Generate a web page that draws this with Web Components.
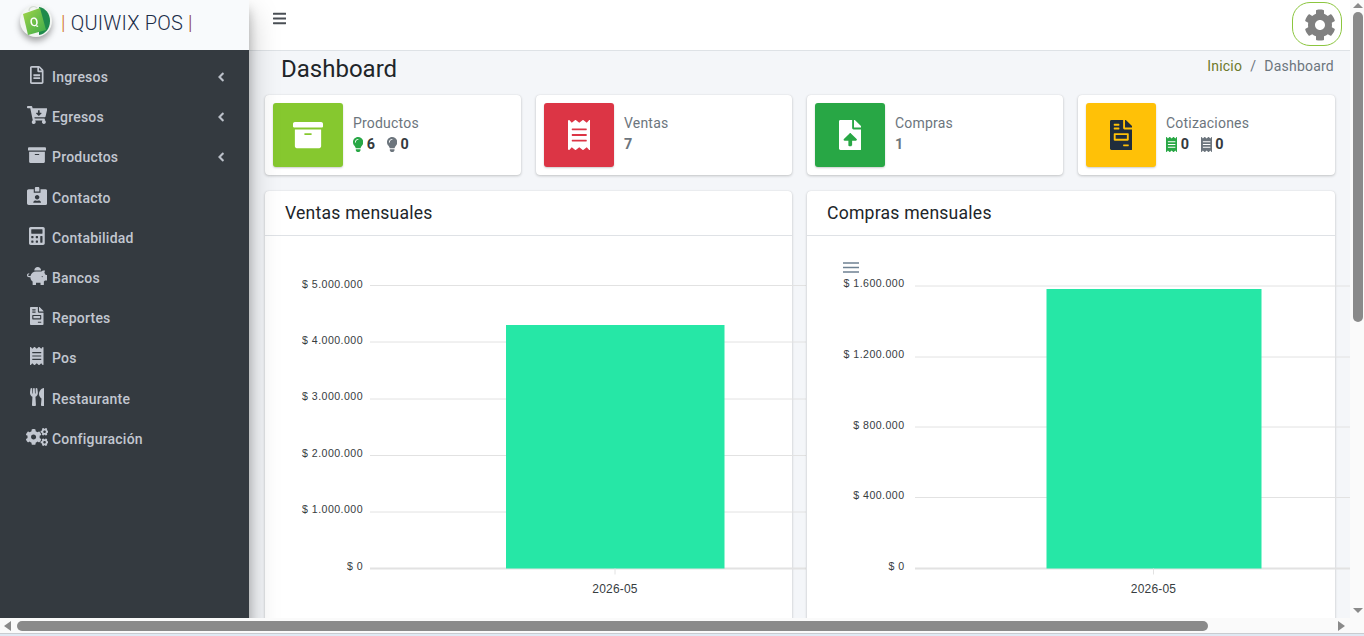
<!DOCTYPE html>
<html lang="es">
<head>
<meta charset="utf-8">
<title>Quiwix POS</title>
<style>
html,body{margin:0;padding:0;height:100%;overflow:hidden;background:#f4f6f9}
body{font-family:Roboto,"Liberation Sans",sans-serif;font-size:14px}
</style>
</head>
<body>
<pos-app>
  <side-bar slot="side">
    <nav-item icon="fileAlt" arrow>Ingresos</nav-item>
    <nav-item icon="cartDown" arrow>Egresos</nav-item>
    <nav-item icon="archive" arrow>Productos</nav-item>
    <nav-item icon="idCard">Contacto</nav-item>
    <nav-item icon="calculator">Contabilidad</nav-item>
    <nav-item icon="piggy">Bancos</nav-item>
    <nav-item icon="invoice">Reportes</nav-item>
    <nav-item icon="receipt">Pos</nav-item>
    <nav-item icon="utensils">Restaurante</nav-item>
    <nav-item icon="cogs">Configuración</nav-item>
  </side-bar>
  <top-bar slot="top"></top-bar>
  <page-head slot="head" title="Dashboard"></page-head>
  <stat-card slot="stats" color="#86c82f" icon="archive" label="Productos" fg="#fff">
    <stat-num icon="bulb" color="#28a745">6</stat-num>
    <stat-num icon="bulb" color="#6c757d">0</stat-num>
  </stat-card>
  <stat-card slot="stats" color="#dc3545" icon="receipt" label="Ventas" fg="#fff" value="7"></stat-card>
  <stat-card slot="stats" color="#28a745" icon="fileUp" label="Compras" fg="#fff" value="1"></stat-card>
  <stat-card slot="stats" color="#ffc107" icon="invoice" label="Cotizaciones" fg="#1f2d3d">
    <stat-num icon="receipt" color="#28a745">0</stat-num>
    <stat-num icon="receipt" color="#6c757d">0</stat-num>
  </stat-card>
  <chart-card slot="charts" title="Ventas mensuales">
    <bar-chart ticks="$ 5.000.000,$ 4.000.000,$ 3.000.000,$ 2.000.000,$ 1.000.000,$ 0"
      ys="49.5,106,163,219.5,276,332.5" laby="52,108,164,221,277,334" labelx="98" gridx="105" bar="241,89,218.5,243.5" center="350"></bar-chart>
  </chart-card>
  <chart-card slot="charts" title="Compras mensuales">
    <bar-chart ticks="$ 1.600.000,$ 1.200.000,$ 800.000,$ 400.000,$ 0"
      ys="50,121,191,261.5,332.5" laby="51,122,193,263,334" labelx="97.5" gridx="108" bar="239.5,53,215,279.5" center="346.5" menu></bar-chart>
  </chart-card>
</pos-app>

<script>
const ICONS = {
  archive:[512,'M32 448c0 17.7 14.3 32 32 32h384c17.7 0 32-14.3 32-32V160H32v288zm160-212c0-6.6 5.4-12 12-12h104c6.6 0 12 5.4 12 12v8c0 6.6-5.4 12-12 12H204c-6.6 0-12-5.4-12-12v-8zM480 32H32C14.3 32 0 46.3 0 64v48c0 8.8 7.2 16 16 16h480c8.8 0 16-7.2 16-16V64c0-17.7-14.3-32-32-32z'],
  cog:[512,'M487.4 315.7l-42.6-24.6c4.3-23.2 4.3-47 0-70.2l42.6-24.6c4.9-2.8 7.1-8.6 5.5-14-11.1-35.6-30-67.8-54.7-94.6-3.8-4.1-10-5.1-14.8-2.3L380.8 110c-17.9-15.4-38.5-27.3-60.8-35.1V25.8c0-5.6-3.9-10.5-9.4-11.7-36.7-8.2-74.3-7.8-109.2 0-5.5 1.2-9.4 6.1-9.4 11.7V75c-22.2 7.9-42.8 19.8-60.8 35.1L88.7 85.5c-4.9-2.8-11-1.9-14.8 2.3-24.7 26.7-43.6 58.9-54.7 94.6-1.7 5.4.6 11.2 5.5 14L67.3 221c-4.3 23.2-4.3 47 0 70.2l-42.6 24.6c-4.9 2.8-7.1 8.6-5.5 14 11.1 35.6 30 67.8 54.7 94.6 3.8 4.1 10 5.1 14.8 2.3l42.6-24.6c17.9 15.4 38.5 27.3 60.8 35.1v49.2c0 5.6 3.9 10.5 9.4 11.7 36.7 8.2 74.3 7.8 109.2 0 5.5-1.2 9.4-6.1 9.4-11.7v-49.2c22.2-7.9 42.8-19.8 60.8-35.1l42.6 24.6c4.9 2.8 11 1.9 14.8-2.3 24.7-26.7 43.6-58.9 54.7-94.6 1.5-5.5-.7-11.3-5.6-14.1zM256 336c-44.1 0-80-35.9-80-80s35.9-80 80-80 80 35.9 80 80-35.9 80-80 80z'],
  fileAlt:[384,'M288 248v28c0 6.6-5.4 12-12 12H108c-6.6 0-12-5.4-12-12v-28c0-6.6 5.4-12 12-12h168c6.6 0 12 5.4 12 12zm-12 72H108c-6.6 0-12 5.4-12 12v28c0 6.6 5.4 12 12 12h168c6.6 0 12-5.4 12-12v-28c0-6.6-5.4-12-12-12zm108-188.1V464c0 26.5-21.5 48-48 48H48c-26.5 0-48-21.5-48-48V48C0 21.5 21.5 0 48 0h204.1C264.8 0 277 5.1 286 14.1L369.9 98c9 8.9 14.1 21.2 14.1 33.9zm-128-80V128h76.1L256 51.9zM336 464V176H232c-13.3 0-24-10.7-24-24V48H48v416h288z'],
  cartDown:[576,'M504.717 320H211.572l6.545 32h268.418c15.401 0 26.816 14.301 23.403 29.319l-5.517 24.276C523.112 414.668 536 433.828 536 456c0 31.202-25.519 56.444-56.824 55.994-29.823-.429-54.35-24.631-55.155-54.447-.44-16.287 6.085-31.049 16.803-41.548H231.176C241.553 426.165 248 440.326 248 456c0 31.813-26.528 57.431-58.67 55.938-28.54-1.325-51.751-24.385-53.251-52.917-1.158-22.034 10.436-41.455 28.051-51.586L93.883 64H24C10.745 64 0 53.255 0 40V24C0 10.745 10.745 0 24 0h102.529c11.401 0 21.228 8.021 23.513 19.19L159.208 64H551.99c15.401 0 26.816 14.301 23.403 29.319l-47.273 208C525.637 312.246 515.923 320 504.717 320zM403.029 192H360v-60c0-6.627-5.373-12-12-12h-24c-6.627 0-12 5.373-12 12v60h-43.029c-10.691 0-16.045 12.926-8.485 20.485l67.029 67.029c4.686 4.686 12.284 4.686 16.971 0l67.029-67.029c7.559-7.559 2.205-20.485-8.486-20.485z'],
  idCard:[576,'M528 64H384v96H192V64H48C21.5 64 0 85.5 0 112v352c0 26.5 21.5 48 48 48h480c26.5 0 48-21.5 48-48V112c0-26.5-21.5-48-48-48zM288 224c35.3 0 64 28.7 64 64s-28.7 64-64 64-64-28.7-64-64 28.7-64 64-64zm93.3 224H194.7c-10.4 0-18.8-10-15.6-19.8 8.3-25.6 32.4-44.2 60.9-44.2h8.2c12.3 5.1 25.7 8 39.8 8s27.6-2.9 39.8-8h8.2c28.4 0 52.5 18.5 60.9 44.2 3.2 9.8-5.2 19.8-15.6 19.8zM352 32c0-17.7-14.3-32-32-32h-64c-17.7 0-32 14.3-32 32v96h128V32z'],
  calculator:[448,'M400 0H48C22.4 0 0 22.4 0 48v416c0 25.6 22.4 48 48 48h352c25.6 0 48-22.4 48-48V48c0-25.6-22.4-48-48-48zM128 435.2c0 6.4-6.4 12.8-12.8 12.8H76.8c-6.4 0-12.8-6.4-12.8-12.8v-38.4c0-6.4 6.4-12.8 12.8-12.8h38.4c6.4 0 12.8 6.4 12.8 12.8v38.4zm0-128c0 6.4-6.4 12.8-12.8 12.8H76.8c-6.4 0-12.8-6.4-12.8-12.8v-38.4c0-6.4 6.4-12.8 12.8-12.8h38.4c6.4 0 12.8 6.4 12.8 12.8v38.4zm128 128c0 6.4-6.4 12.8-12.8 12.8h-38.4c-6.4 0-12.8-6.4-12.8-12.8v-38.4c0-6.4 6.4-12.8 12.8-12.8h38.4c6.4 0 12.8 6.4 12.8 12.8v38.4zm0-128c0 6.4-6.4 12.8-12.8 12.8h-38.4c-6.4 0-12.8-6.4-12.8-12.8v-38.4c0-6.4 6.4-12.8 12.8-12.8h38.4c6.4 0 12.8 6.4 12.8 12.8v38.4zm128 128c0 6.4-6.4 12.8-12.8 12.8h-38.4c-6.4 0-12.8-6.4-12.8-12.8V268.8c0-6.4 6.4-12.8 12.8-12.8h38.4c6.4 0 12.8 6.4 12.8 12.8v166.4zm0-256c0 6.4-6.4 12.8-12.8 12.8H76.8c-6.4 0-12.8-6.4-12.8-12.8V76.8C64 70.4 70.4 64 76.8 64h294.4c6.4 0 12.8 6.4 12.8 12.8v102.4z'],
  piggy:[576,'M560 224h-29.5c-8.8-20-21.6-37.7-37.4-52.5L512 96h-32c-29.4 0-55.4 13.5-73 34.3-7.6-1.1-15.1-2.3-23-2.3H256c-77.4 0-141.9 55-156.8 128H56c-14.8 0-26.5-13.5-23.5-28.8C34.7 215.8 45.4 208 57 208h1c3.3 0 6-2.7 6-6v-20c0-3.3-2.7-6-6-6-28.5 0-53.9 20.4-57.5 48.6C-3.9 258.8 22.7 288 56 288h40c0 52.2 25.4 98.1 64 127.3V496c0 8.8 7.2 16 16 16h64c8.8 0 16-7.2 16-16v-48h128v48c0 8.8 7.2 16 16 16h64c8.8 0 16-7.2 16-16v-80.7c11.8-8.9 22.3-19.4 31.3-31.3H560c8.8 0 16-7.2 16-16V240c0-8.8-7.2-16-16-16zm-128 64c-8.8 0-16-7.2-16-16s7.2-16 16-16 16 7.2 16 16-7.2 16-16 16zM256 96h128c5.4 0 10.7.4 15.9.8 0-.3.1-.5.1-.8 0-53-43-96-96-96s-96 43-96 96c0 2.1.5 4.1.6 6.2 15.2-3.9 31-6.2 47.4-6.2z'],
  invoice:[384,'M288 256H96v64h192v-64zm89-151L279.1 7c-4.5-4.5-10.6-7-17-7H256v128h128v-6.1c0-6.3-2.5-12.4-7-16.9zm-153 31V0H24C10.7 0 0 10.7 0 24v464c0 13.3 10.7 24 24 24h336c13.3 0 24-10.7 24-24V160H248c-13.2 0-24-10.8-24-24zM64 72c0-4.42 3.58-8 8-8h80c4.42 0 8 3.58 8 8v16c0 4.42-3.58 8-8 8H72c-4.42 0-8-3.58-8-8V72zm0 64c0-4.42 3.58-8 8-8h80c4.42 0 8 3.58 8 8v16c0 4.42-3.58 8-8 8H72c-4.42 0-8-3.58-8-8v-16zm256 304c0 4.42-3.58 8-8 8h-80c-4.42 0-8-3.58-8-8v-16c0-4.42 3.58-8 8-8h80c4.42 0 8 3.58 8 8v16zm0-200v96c0 8.84-7.16 16-16 16H80c-8.84 0-16-7.16-16-16v-96c0-8.84 7.16-16 16-16h224c8.84 0 16 7.16 16 16z'],
  receipt:[384,'M358.4 3.2L320 48 265.6 3.2a15.9 15.9 0 0 0-19.2 0L192 48 137.6 3.2a15.9 15.9 0 0 0-19.2 0L64 48 25.6 3.2C15-4.7 0 2.8 0 16v480c0 13.2 15 20.7 25.6 12.8L64 464l54.4 44.8a15.9 15.9 0 0 0 19.2 0L192 464l54.4 44.8a15.9 15.9 0 0 0 19.2 0L320 464l38.4 44.8c10.5 7.9 25.6.4 25.6-12.8V16c0-13.2-15-20.7-25.6-12.8zM320 360c0 4.4-3.6 8-8 8H72c-4.4 0-8-3.6-8-8v-16c0-4.4 3.6-8 8-8h240c4.4 0 8 3.6 8 8v16zm0-96c0 4.4-3.6 8-8 8H72c-4.4 0-8-3.6-8-8v-16c0-4.4 3.6-8 8-8h240c4.4 0 8 3.6 8 8v16zm0-96c0 4.4-3.6 8-8 8H72c-4.4 0-8-3.6-8-8v-16c0-4.4 3.6-8 8-8h240c4.4 0 8 3.6 8 8v16z'],
  utensils:[416,'M207.9 15.2c.8 4.7 16.1 94.5 16.1 128.8 0 52.3-27.8 89.6-68.9 104.6L168 486.7c.7 13.7-10.2 25.3-24 25.3H80c-13.7 0-24.7-11.5-24-25.3l12.9-238.1C27.7 233.6 0 196.2 0 144 0 109.6 15.3 19.9 16.1 15.2 19.3-5.1 61.4-5.4 64 16.3v141.2c1.3 3.4 15.1 3.2 16 0 1.4-25.3 7.9-139.2 8-141.8 3.3-20.8 44.7-20.8 47.9 0 .2 2.7 6.6 116.5 8 141.8.9 3.2 14.8 3.4 16 0V16.3c2.6-21.6 44.8-21.4 48-1.1zm119.2 285.7l-15 185.1c-1.2 14 9.9 26 23.9 26h56c13.3 0 24-10.7 24-24V24c0-13.2-10.7-24-24-24-82.5 0-221.4 178.5-64.9 300.9z'],
  cogs:[640,'M512.1 191l-8.2 14.3c-3 5.3-9.4 7.5-15.1 5.4-11.8-4.4-22.6-10.7-32.1-18.6-4.6-3.8-5.8-10.5-2.8-15.7l8.2-14.3c-6.9-8-12.3-17.3-15.9-27.4h-16.5c-6 0-11.2-4.3-12.2-10.3-2-12-2.1-24.6 0-37.1 1-6 6.2-10.4 12.2-10.4h16.5c3.6-10.1 9-19.4 15.9-27.4l-8.2-14.3c-3-5.2-1.9-11.9 2.8-15.7 9.5-7.9 20.4-14.2 32.1-18.6 5.7-2.1 12.1.1 15.1 5.4l8.2 14.3c10.5-1.9 21.2-1.9 31.7 0L552 6.3c3-5.3 9.4-7.5 15.1-5.4 11.8 4.4 22.6 10.7 32.1 18.6 4.6 3.8 5.8 10.5 2.8 15.7l-8.2 14.3c6.9 8 12.3 17.3 15.9 27.4h16.5c6 0 11.2 4.3 12.2 10.3 2 12 2.1 24.6 0 37.1-1 6-6.2 10.4-12.2 10.4h-16.5c-3.6 10.1-9 19.4-15.9 27.4l8.2 14.3c3 5.2 1.9 11.9-2.8 15.7-9.5 7.9-20.4 14.2-32.1 18.6-5.7 2.1-12.1-.1-15.1-5.4l-8.2-14.3c-10.4 1.9-21.2 1.9-31.7 0zm-10.5-58.8c38.5 29.6 82.4-14.3 52.8-52.8-38.5-29.7-82.4 14.3-52.8 52.8zM386.3 286.1l33.7 16.8c10.1 5.8 14.5 18.1 10.5 29.1-8.9 24.2-26.4 46.4-42.6 65.8-7.4 8.9-20.2 11.1-30.3 5.3l-29.1-16.8c-16 13.7-34.6 24.6-54.9 31.7v33.6c0 11.6-8.3 21.6-19.7 23.6-24.6 4.2-50.4 4.4-75.9 0-11.5-2-20-11.9-20-23.6V418c-20.3-7.2-38.9-18-54.9-31.7L74 403c-10 5.8-22.9 3.6-30.3-5.3-16.2-19.4-33.3-41.6-42.2-65.7-4-10.9.4-23.2 10.5-29.1l33.3-16.8c-3.9-20.9-3.9-42.4 0-63.4L12 205.8c-10.1-5.8-14.6-18.1-10.5-29 8.9-24.2 26-46.4 42.2-65.8 7.4-8.9 20.2-11.1 30.3-5.3l29.1 16.8c16-13.7 34.6-24.6 54.9-31.7V57.1c0-11.5 8.2-21.5 19.6-23.5 24.6-4.2 50.5-4.4 76-.1 11.5 2 20 11.9 20 23.6v33.6c20.3 7.2 38.9 18 54.9 31.7l29.1-16.8c10-5.8 22.9-3.6 30.3 5.3 16.2 19.4 33.2 41.6 42.1 65.8 4 10.9.1 23.2-10 29.1l-33.7 16.8c3.9 21 3.9 42.5 0 63.5zm-117.6 21.1c59.2-77-28.7-164.9-105.7-105.7-59.2 77 28.7 164.9 105.7 105.7zm243.4 182.7l-8.2 14.3c-3 5.3-9.4 7.5-15.1 5.4-11.8-4.4-22.6-10.7-32.1-18.6-4.6-3.8-5.8-10.5-2.8-15.7l8.2-14.3c-6.9-8-12.3-17.3-15.9-27.4h-16.5c-6 0-11.2-4.3-12.2-10.3-2-12-2.1-24.6 0-37.1 1-6 6.2-10.4 12.2-10.4h16.5c3.6-10.1 9-19.4 15.9-27.4l-8.2-14.3c-3-5.2-1.9-11.9 2.8-15.7 9.5-7.9 20.4-14.2 32.1-18.6 5.7-2.1 12.1.1 15.1 5.4l8.2 14.3c10.5-1.9 21.2-1.9 31.7 0l8.2-14.3c3-5.3 9.4-7.5 15.1-5.4 11.8 4.4 22.6 10.7 32.1 18.6 4.6 3.8 5.8 10.5 2.8 15.7l-8.2 14.3c6.9 8 12.3 17.3 15.9 27.4h16.5c6 0 11.2 4.3 12.2 10.3 2 12 2.1 24.6 0 37.1-1 6-6.2 10.4-12.2 10.4h-16.5c-3.6 10.1-9 19.4-15.9 27.4l8.2 14.3c3 5.2 1.9 11.9-2.8 15.7-9.5 7.9-20.4 14.2-32.1 18.6-5.7 2.1-12.1-.1-15.1-5.4l-8.2-14.3c-10.4 1.9-21.2 1.9-31.7 0zM501.6 431c38.5 29.6 82.4-14.3 52.8-52.8-38.5-29.6-82.4 14.3-52.8 52.8z'],
  bulb:[352,'M96.06 454.35c.01 6.29 1.87 12.45 5.36 17.69l17.09 25.69a31.99 31.99 0 0 0 26.64 14.28h61.71a31.99 31.99 0 0 0 26.64-14.28l17.09-25.69a31.99 31.99 0 0 0 5.36-17.69l.04-38.35H96.01l.05 38.35zM0 176c0 44.37 16.45 84.85 43.56 115.78 16.52 18.85 42.36 58.23 52.21 91.45.04.26.07.52.11.78h160.24c.04-.26.07-.51.11-.78 9.85-33.22 35.69-72.6 52.21-91.45C335.55 260.85 352 220.37 352 176 352 78.61 272.91-.3 175.45 0 73.44.31 0 82.97 0 176zm176-80c-44.11 0-80 35.89-80 80 0 8.84-7.16 16-16 16s-16-7.16-16-16c0-61.76 50.24-112 112-112 8.84 0 16 7.16 16 16s-7.16 16-16 16z'],
  fileUp:[384,'M224 136V0H24C10.7 0 0 10.7 0 24v464c0 13.3 10.7 24 24 24h336c13.3 0 24-10.7 24-24V160H248c-13.2 0-24-10.8-24-24zm65.18 216.01H224v80c0 8.84-7.16 16-16 16h-32c-8.84 0-16-7.16-16-16v-80H94.82c-14.28 0-21.41-17.29-11.27-27.36l96.42-95.7c6.65-6.61 17.39-6.61 24.04 0l96.42 95.7c10.15 10.07 3.03 27.36-11.25 27.36zM377 105L279.1 7c-4.5-4.5-10.6-7-17-7H256v128h128v-6.1c0-6.3-2.5-12.4-7-16.9z'],
  chevron:[320,'M34.52 239.03L228.87 44.69c9.37-9.37 24.57-9.37 33.94 0l22.67 22.67c9.36 9.36 9.37 24.52.04 33.9L131.49 256l154.02 154.75c9.34 9.38 9.32 24.54-.04 33.9l-22.67 22.67c-9.37 9.37-24.57 9.37-33.94 0L34.52 272.97c-9.37-9.37-9.37-24.57 0-33.94z'],
  bars:[448,'M16 132h416c8.837 0 16-7.163 16-16V76c0-8.837-7.163-16-16-16H16C7.163 60 0 67.163 0 76v40c0 8.837 7.163 16 16 16zm0 160h416c8.837 0 16-7.163 16-16v-40c0-8.837-7.163-16-16-16H16c-8.837 0-16 7.163-16 16v40c0 8.837 7.163 16 16 16zm0 160h416c8.837 0 16-7.163 16-16v-40c0-8.837-7.163-16-16-16H16c-8.837 0-16 7.163-16 16v40c0 8.837 7.163 16 16 16z']
}

// renders one icon of the table above, height comes from --s
class FaIcon extends HTMLElement{
    constructor(){
        super();
        const el = this.attachShadow({mode:'open'})
        const ic = ICONS[this.getAttribute('name')]
        el.innerHTML = `
        <style>
        :host{display:inline-flex;align-items:center;justify-content:center;line-height:0}
        svg{height:var(--s,16px);width:auto;display:block;fill:currentColor;stroke:currentColor;stroke-width:var(--sw,0)}
        </style>
        <svg viewBox="0 0 ${ic[0]} 512"><path d="${ic[1]}"/></svg>`
    }
}
customElements.define('fa-icon', FaIcon)

class PosApp extends HTMLElement{
    constructor(){
        super();
        const el = this.attachShadow({mode:'open'})
        el.innerHTML = `
        <style>
        :host{display:grid;grid-template-columns:1350px 14px;grid-template-rows:618px 15px 3px;width:1364px;height:636px;overflow:hidden}
        .page{display:grid;grid-template-columns:249px 1fr;height:618px;overflow:hidden;background:#f4f6f9}
        .side{position:relative;z-index:2;display:block;box-shadow:0 14px 28px rgba(0,0,0,.25),0 10px 10px rgba(0,0,0,.22)}
        .main{display:flex;flex-direction:column;min-width:0}
        .stats{display:grid;grid-template-columns:256px 256px 256px 257px;gap:15px;padding-left:16px}
        .charts{display:grid;grid-template-columns:527px 528px;gap:15px;padding:16px 0 0 16px}
        .strip{grid-column:1 / 3;background:linear-gradient(#c9ccd0 0 1px,#dfe9f3 1px)}
        </style>
        <div class="page">
          <div class="side"><slot name="side"></slot></div>
          <div class="main">
            <slot name="top"></slot>
            <slot name="head"></slot>
            <div class="stats"><slot name="stats"></slot></div>
            <div class="charts"><slot name="charts"></slot></div>
          </div>
        </div>
        <scroll-bar dir="v"></scroll-bar>
        <scroll-bar dir="h" style="grid-column:1 / 3"></scroll-bar>
        <div class="strip"></div>`
    }
}
customElements.define('pos-app', PosApp)

// the browser scrollbars of the screenshot
class ScrollBar extends HTMLElement{
    constructor(){
        super();
        const el = this.attachShadow({mode:'open'})
        const v = this.getAttribute('dir') === 'v'
        el.innerHTML = `
        <style>
        :host{display:flex;flex-direction:${v ? 'column' : 'row'};background:#fafafa;${v ? 'height:618px' : 'height:15px'}}
        .thumb{background:#8a8a8a;border-radius:5px;flex:none}
        ${v
          ? `.thumb{width:10px;height:310px;margin:12px 0 0 3px}
             i{display:block;width:0;height:0;border-left:5px solid transparent;border-right:5px solid transparent;margin-left:3px}
             .up{border-bottom:5px solid #8a8a8a;margin-top:3px;margin-bottom:-8px}
             .dn{border-top:5px solid #8a8a8a;margin-top:286px}`
          : `.thumb{width:1191px;height:10px;margin:3px 0 0 6px}
             i{display:block;width:0;height:0;border-top:5px solid transparent;border-bottom:5px solid transparent;margin-top:3px}
             .l{border-right:7px solid #8a8a8a;margin-left:4px}
             .r{border-left:7px solid #8a8a8a;margin-left:130px}`}
        </style>
        ${v ? `<i class="up"></i><div class="thumb"></div><i class="dn"></i>`
            : `<i class="l"></i><div class="thumb"></div><i class="r"></i>`}`
    }
}
customElements.define('scroll-bar', ScrollBar)

class SideBar extends HTMLElement{
    constructor(){
        super();
        const el = this.attachShadow({mode:'open'})
        el.innerHTML = `
        <style>
        :host{display:flex;flex-direction:column;height:618px;background:#343a40}
        header{height:50px;flex:none;background:#f8fafc;display:flex;align-items:center;padding-left:20px;gap:9px}
        svg{width:32px;height:32px;margin-top:-8px;flex:none;overflow:visible;filter:drop-shadow(0 4px 3px rgba(0,0,0,.35))}
        .brand{font:300 20px Roboto,sans-serif;letter-spacing:.2px;color:#1a2c48;white-space:nowrap;margin-top:-5px}
        .brand b{font-weight:300;color:#d0701a}
        .brand u{text-decoration:none;color:#8c3b3b}
        nav{display:flex;flex-direction:column;padding-top:7px}
        text{font:500 12px Roboto,sans-serif;fill:#fff}
        </style>
        <header>
          <svg viewBox="0 0 32 32">
            <defs><linearGradient id="bag" x1="0" y1="0" x2="1" y2="1"><stop offset="0" stop-color="#a3d548"/><stop offset="1" stop-color="#3bab4b"/></linearGradient></defs>
            <circle cx="16" cy="16" r="16" fill="#f2f5f2"/>
            <path d="M19 2c6.500 1 11 6.500 11 14s-4.500 13-11 14z" fill="#1f8a4c"/>
            <path d="M3 9l17-6 6 22-18 5z" fill="url(#bag)"/>
            <path d="M9 6c0-4 5-6 8-3" fill="none" stroke="#d5dbd5" stroke-width="1.2"/>
            <text x="10" y="21" transform="rotate(-10 15 17)">Q</text>
          </svg>
          <div class="brand"><b>|</b> QUIWIX POS <u>|</u></div>
        </header>
        <nav><slot></slot></nav>`
    }
}
customElements.define('side-bar', SideBar)

class NavItem extends HTMLElement{
    constructor(){
        super();
        const el = this.attachShadow({mode:'open'})
        el.innerHTML = `
        <style>
        :host{display:flex;align-items:center;height:40.2px;color:#c2c7d0;font:500 14px Roboto,sans-serif;letter-spacing:.22px;position:relative}
        .ic{width:52px;flex:none;display:flex;justify-content:center;padding-left:22px;box-sizing:border-box;--s:18px;margin-top:-4px}
        .ar{position:absolute;left:218px;top:15px;--s:10px;--sw:30px;color:#c2c7d0}
        </style>
        <span class="ic"><fa-icon name="${this.getAttribute('icon')}"></fa-icon></span>
        <slot></slot>
        ${this.hasAttribute('arrow') ? `<fa-icon class="ar" name="chevron"></fa-icon>` : ''}`
    }
}
customElements.define('nav-item', NavItem)

class TopBar extends HTMLElement{
    constructor(){
        super();
        const el = this.attachShadow({mode:'open'})
        el.innerHTML = `
        <style>
        :host{display:flex;flex:none;align-items:flex-start;justify-content:space-between;height:51px;box-sizing:border-box;background:#fff;border-bottom:1px solid #dee2e6;padding:2px 8px 0 24px}
        .menu{--s:15px;color:#4a4f55;margin-top:9px}
        .gear{width:50px;height:44px;box-sizing:border-box;border:1px solid #8cc63f;border-radius:18px;padding:1px 0 0 6px;display:flex;align-items:center;justify-content:center;--s:32px;color:#808080}
        </style>
        <fa-icon class="menu" name="bars"></fa-icon>
        <div class="gear"><fa-icon name="cog"></fa-icon></div>`
    }
}
customElements.define('top-bar', TopBar)

class PageHead extends HTMLElement{
    constructor(){
        super();
        const el = this.attachShadow({mode:'open'})
        const t = this.getAttribute('title')
        el.innerHTML = `
        <style>
        :host{display:flex;flex:none;justify-content:space-between;align-items:flex-start;height:44px;padding:0 16px 0 32px;box-sizing:border-box;font-family:Roboto,sans-serif}
        h1{margin:3px 0 0;font-size:24px;font-weight:400;color:#212529;line-height:30px}
        ol{list-style:none;margin:7px 0 0;padding:0;display:flex;font-size:14px;line-height:16px;color:#6c757d;letter-spacing:.23px}
        a{color:#6d7a2c}
        li+li::before{content:"/";padding:0 8px}
        </style>
        <h1>${t}</h1>
        <ol><li><a>Inicio</a></li><li>${t}</li></ol>`
    }
}
customElements.define('page-head', PageHead)

class StatCard extends HTMLElement{
    constructor(){
        super();
        const el = this.attachShadow({mode:'open'})
        const value = this.getAttribute('value')
        el.innerHTML = `
        <style>
        :host{display:flex;height:80px;box-sizing:border-box;padding:8px;gap:10px;background:#fff;border-radius:4px;box-shadow:0 0 1px rgba(0,0,0,.125),0 1px 3px rgba(0,0,0,.2);font-family:Roboto,sans-serif}
        .box{width:70px;height:64px;flex:none;border-radius:3px;display:flex;align-items:center;justify-content:center;background:${this.getAttribute('color')};color:${this.getAttribute('fg')};box-shadow:0 1px 2px rgba(0,0,0,.2);--s:30px}
        .txt{display:flex;flex-direction:column;justify-content:center;padding-bottom:3px;min-width:0}
        .lab{font-size:14px;line-height:21px;color:#6c757d;letter-spacing:.2px}
        .val{font-size:14.4px;font-weight:700;line-height:21px;color:#6c757d;display:flex;gap:11.5px}
        </style>
        <div class="box"><fa-icon name="${this.getAttribute('icon')}"></fa-icon></div>
        <div class="txt">
          <span class="lab">${this.getAttribute('label')}</span>
          <span class="val">${value !== null ? value : ''}<slot></slot></span>
        </div>`
    }
}
customElements.define('stat-card', StatCard)

class StatNum extends HTMLElement{
    constructor(){
        super();
        const el = this.attachShadow({mode:'open'})
        el.innerHTML = `
        <style>
        :host{display:inline-flex;align-items:center;gap:3.5px;color:#343a40;--s:15px}
        fa-icon{color:${this.getAttribute('color')}}
        </style>
        <fa-icon name="${this.getAttribute('icon')}"></fa-icon><slot></slot>`
    }
}
customElements.define('stat-num', StatNum)

class ChartCard extends HTMLElement{
    constructor(){
        super();
        const el = this.attachShadow({mode:'open'})
        el.innerHTML = `
        <style>
        :host{display:block;background:#fff;border-radius:4px 4px 0 0;box-shadow:0 0 1px rgba(0,0,0,.125),0 1px 3px rgba(0,0,0,.2);font-family:Roboto,sans-serif;min-width:0}
        header{height:45px;box-sizing:border-box;border-bottom:1px solid #dfe2e6;padding:0 20px;display:flex;align-items:center;font-size:17.6px;color:#212529;letter-spacing:.22px}
        </style>
        <header>${this.getAttribute('title')}</header>
        <slot></slot>`
    }
}
customElements.define('chart-card', ChartCard)

class BarChart extends HTMLElement{
    constructor(){
        super();
        const el = this.attachShadow({mode:'open'})
        const ticks = this.getAttribute('ticks').split(',')
        const ys = this.getAttribute('ys').split(',').map(Number)
        const laby = this.getAttribute('laby').split(',').map(Number)
        const lx = +this.getAttribute('labelx')
        const gx = +this.getAttribute('gridx')
        const [bx, by, bw, bh] = this.getAttribute('bar').split(',').map(Number)
        const c = +this.getAttribute('center')
        const base = ys[ys.length - 1]
        let rows = ''
        ticks.forEach((t, i) => {
            const last = i === ticks.length - 1
            rows += `<line x1="${gx}" x2="${gx + 436}" y1="${ys[i]}" y2="${ys[i]}" stroke="#e2e2e2" stroke-width="${last ? 2 : 1}"/>`
            rows += `<text class="y" x="${lx}" y="${laby[i]}" text-anchor="end">${t}</text>`
        })
        el.innerHTML = `
        <style>
        :host{display:block;height:400px}
        svg{display:block;overflow:visible}
        text{font-family:"Liberation Sans",Arial,sans-serif;fill:#373d3f}
        .y{font-size:10.6px;letter-spacing:.45px}
        .x{font-size:12px;letter-spacing:.2px}
        </style>
        <svg width="527" height="400">
          ${rows}
          <rect x="${bx}" y="${by}" width="${bw}" height="${bh}" fill="#26e7a6"/>
          <line x1="${c}" x2="${c}" y1="${base}" y2="${base + 6}" stroke="#e2e2e2"/>
          <text class="x" x="${c}" y="357" text-anchor="middle">2026-05</text>
          ${this.hasAttribute('menu') ? `<g stroke="#6e8192" stroke-width="1.5"><line x1="36" x2="52" y1="27" y2="27"/><line x1="36" x2="52" y1="31.5" y2="31.5"/><line x1="36" x2="52" y1="36" y2="36"/></g>` : ''}
        </svg>`
    }
}
customElements.define('bar-chart', BarChart)
</script>
</body>
</html>
